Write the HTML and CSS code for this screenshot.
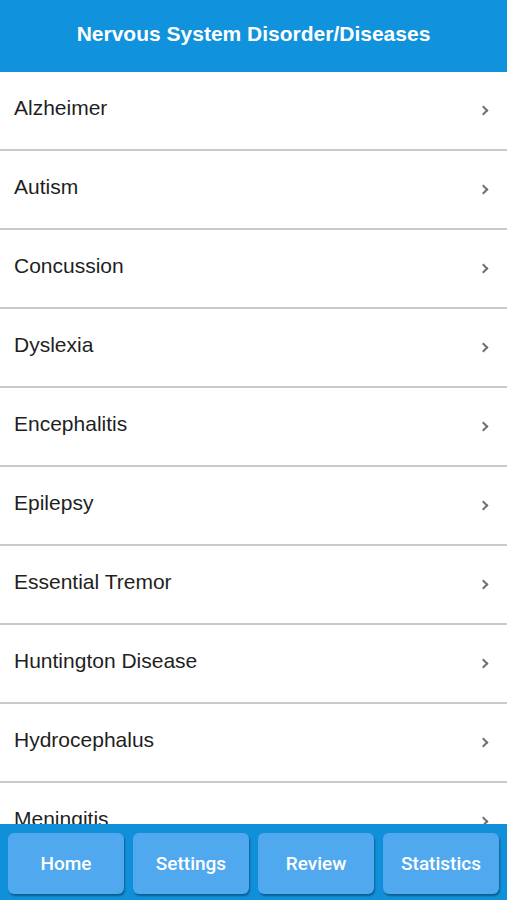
FILE: index.html
```html
<!DOCTYPE html>
<html lang="en">
<head>
    <meta charset="UTF-8">
    <meta name="viewport" content="width=device-width, initial-scale=1.0">
    <title>Nervous System Disorder/Diseases</title>
    <link rel="stylesheet" href="styles.css">
</head>
<body>
    <div class="app">
        <header class="topbar">
            <h1>Nervous System Disorder/Diseases</h1>
        </header>
        <ul class="list">
            <li><span>Alzheimer</span><i class="chev"></i></li>
            <li><span>Autism</span><i class="chev"></i></li>
            <li><span>Concussion</span><i class="chev"></i></li>
            <li><span>Dyslexia</span><i class="chev"></i></li>
            <li><span>Encephalitis</span><i class="chev"></i></li>
            <li><span>Epilepsy</span><i class="chev"></i></li>
            <li><span>Essential Tremor</span><i class="chev"></i></li>
            <li><span>Huntington Disease</span><i class="chev"></i></li>
            <li><span>Hydrocephalus</span><i class="chev"></i></li>
            <li><span>Meningitis</span><i class="chev"></i></li>
        </ul>
        <nav class="tabs">
            <button>Home</button>
            <button>Settings</button>
            <button>Review</button>
            <button>Statistics</button>
        </nav>
    </div>
</body>
</html>
```

FILE: styles.css
```css
body {
    margin: 0;
    font-family: "Liberation Sans", Arial, sans-serif;
    background: #fff;
}
.app {
    display: flex;
    flex-direction: column;
    height: 900px;
    overflow: hidden;
}
.topbar {
    flex: none;
    height: 72px;
    background: #1192dc;
    display: flex;
    align-items: center;
    justify-content: center;
}
.topbar h1 {
    margin: 0 0 5px;
    color: #fff;
    font-size: 21px;
    font-weight: bold;
}
.list {
    flex: 1;
    margin: 0;
    padding: 0;
    list-style: none;
    overflow: hidden;
}
.list li {
    height: 77px;
    border-bottom: 2px solid #c9c9c9;
    display: flex;
    align-items: center;
    justify-content: space-between;
    padding: 0 20px 0 14px;
    color: #1f1f1f;
    font-size: 21px;
}
.list li span {
    margin-top: -6px;
}
.chev {
    width: 5px;
    height: 5px;
    border-top: 2px solid #707070;
    border-right: 2px solid #707070;
    transform: rotate(45deg);
}
.tabs {
    flex: none;
    height: 76px;
    box-sizing: border-box;
    background: #1190da;
    display: grid;
    grid-template-columns: repeat(4, 1fr);
    gap: 9px;
    padding: 9px 8px 6px;
}
.tabs button {
    border: none;
    border-radius: 6px;
    background: #50a9ef;
    color: #fff;
    font-family: Roboto, "Liberation Sans", sans-serif;
    font-size: 19px;
    font-weight: 500;
    box-shadow: 1px 2px 2px rgba(0, 0, 0, 0.35);
}
```
